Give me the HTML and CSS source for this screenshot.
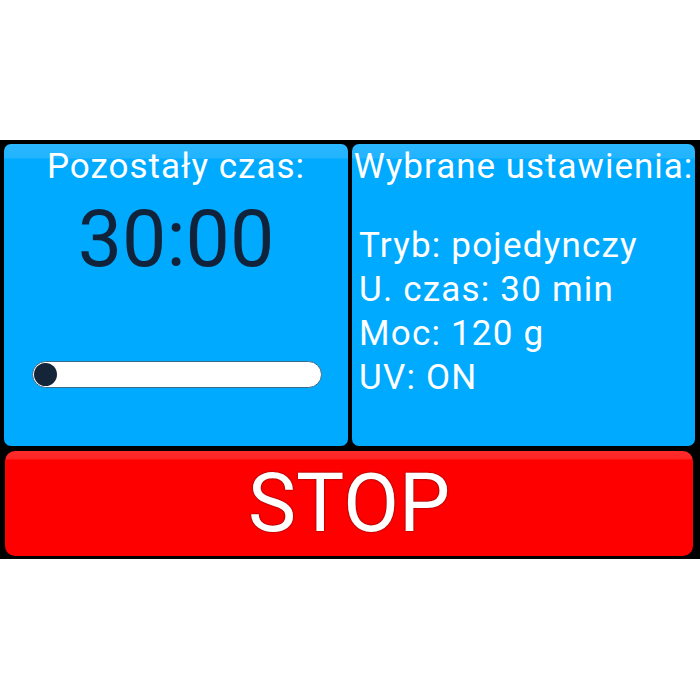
FILE: index.html
```html
<!DOCTYPE html>
<html>
<head>
<meta charset="utf-8">
<link rel="stylesheet" href="styles.css">
</head>
<body>
<div class="screen">
  <div class="panels">
    <div class="panel left">
      <div class="heading">Pozostały czas:</div>
      <div class="timer">30:00</div>
      <div class="slider"><div class="knob"></div></div>
    </div>
    <div class="panel right">
      <div class="heading">Wybrane ustawienia:</div>
      <div class="settings">
        <div>Tryb: pojedynczy</div>
        <div>U. czas: 30 min</div>
        <div>Moc: 120 g</div>
        <div>UV: ON</div>
      </div>
    </div>
  </div>
  <div class="stop">STOP</div>
</div>
</body>
</html>
```
FILE: styles.css
```css
html, body {
  margin: 0;
  padding: 0;
  background: #ffffff;
}
body {
  width: 700px;
  height: 700px;
  font-family: Roboto, "Noto Sans", sans-serif;
}
.screen {
  margin-top: 140px;
  height: 419px;
  box-sizing: border-box;
  background: #000000;
  padding: 4px 5px 3px 4px;
  display: flex;
  flex-direction: column;
  gap: 5px;
}
.panels {
  display: grid;
  grid-template-columns: 344px 343px;
  gap: 4px;
  height: 302px;
}
.panel {
  border-radius: 7px;
  background: linear-gradient(#2ab7ff 0px, #22b4ff 14px, #00aaff 15px, #00aaff 100%);
  color: #ffffff;
  display: flex;
  flex-direction: column;
  overflow: hidden;
}
.heading {
  font-size: 35px;
  line-height: 40px;
  letter-spacing: 1px;
  text-align: center;
  margin-top: 3px;
  white-space: nowrap;
}
.timer {
  font-size: 79px;
  line-height: 80px;
  text-align: center;
  color: #10233a;
  margin-top: 12px;
}
.slider {
  margin: 82px 0 0 28px;
  width: 290px;
  height: 27px;
  box-sizing: border-box;
  border-radius: 14px;
  background: #ffffff;
  border: 1px solid #3c6a8a;
  display: flex;
  align-items: center;
  padding-left: 1px;
}
.knob {
  width: 23px;
  height: 23px;
  border-radius: 50%;
  background: #14253a;
}
.settings {
  margin-top: 37px;
  padding-left: 7px;
  font-size: 35px;
  line-height: 44px;
  letter-spacing: 1.2px;
  white-space: nowrap;
}
.stop {
  height: 105px;
  margin-left: 1px;
  margin-right: 2px;
  border-radius: 10px;
  background: linear-gradient(#ff2c2c 0px, #ff2424 8px, #ff0000 9px, #ff0000 100%);
  color: #ffffff;
  font-size: 81px;
  line-height: 105px;
  text-align: center;
  text-shadow: 0 0 2px rgba(60, 0, 0, 0.9);
}
```
